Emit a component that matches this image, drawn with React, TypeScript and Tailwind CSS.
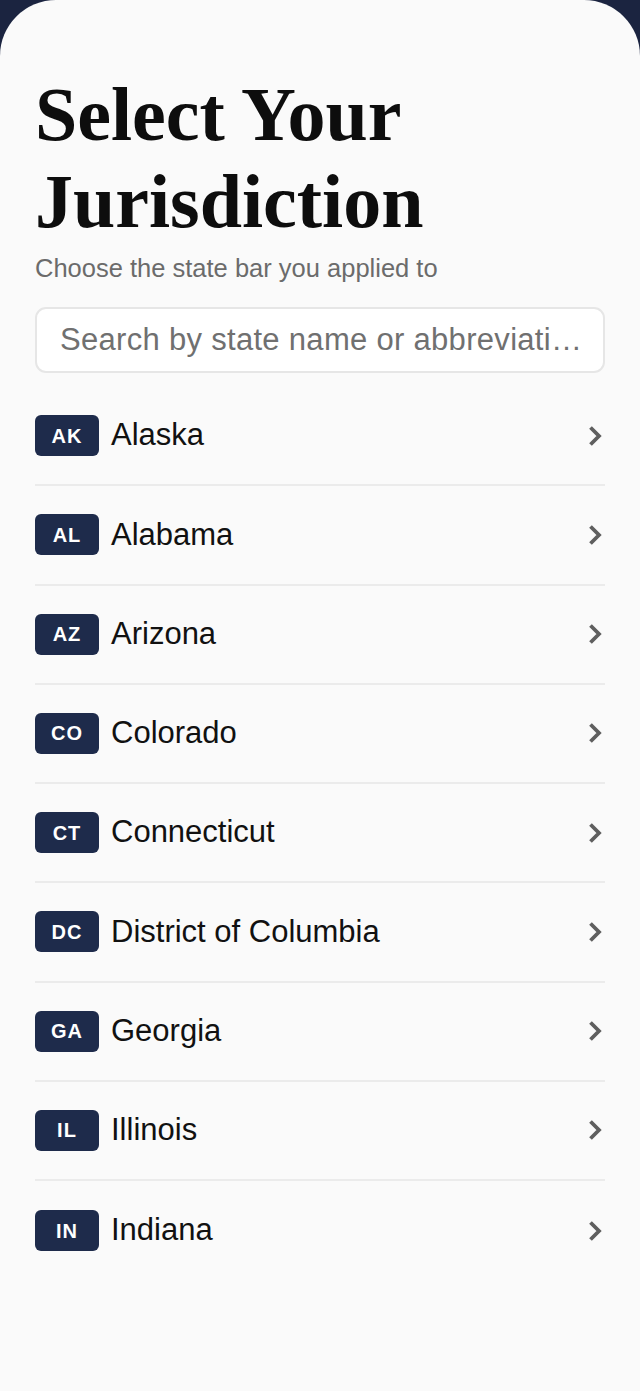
import React from 'react'

const states = [
  { code: 'AK', name: 'Alaska' },
  { code: 'AL', name: 'Alabama' },
  { code: 'AZ', name: 'Arizona' },
  { code: 'CO', name: 'Colorado' },
  { code: 'CT', name: 'Connecticut' },
  { code: 'DC', name: 'District of Columbia' },
  { code: 'GA', name: 'Georgia' },
  { code: 'IL', name: 'Illinois' },
  { code: 'IN', name: 'Indiana' },
]

function Chevron() {
  return (
    <svg width="16" height="22" viewBox="0 0 16 22" fill="none" className="mr-[2px]">
      <path d="M3.5 2.5 L12 11 L3.5 19.5" stroke="#5f5f5f" strokeWidth="3.8" strokeLinecap="butt" strokeLinejoin="miter" />
    </svg>
  )
}

export default function App() {
  return (
    <div className="min-h-screen bg-[#1b2440]">
      <div className="min-h-[1391px] rounded-t-[56px] bg-[#fafafa] px-[35px] pt-[71px] font-['Liberation_Sans',Arial,sans-serif]">
        <h1 className="font-['Liberation_Serif','Times_New_Roman',serif] text-[76px] font-bold leading-[87px] text-[#0d0d0d]">
          Select Your
          <br />
          Jurisdiction
        </h1>
        <p className="mt-[7px] text-[25.5px] leading-[32px] text-[#6b6b6b]">Choose the state bar you applied to</p>

        <input
          type="text"
          placeholder="Search by state name or abbreviation"
          className="mt-[23px] block h-[66px] w-full text-ellipsis rounded-[11px] border-2 border-[#e6e6e6] bg-white pl-[23px] pr-[20px] text-[31px] tracking-[0.3px] text-[#111] outline-none placeholder:text-[#707070]"
        />

        <ul className="mt-[14px]">
          {states.map((s, i) => (
            <li
              key={s.code}
              className={
                i === states.length - 1
                  ? 'flex h-[99.25px] items-center'
                  : 'flex h-[99.25px] items-center border-b-2 border-[#ebebeb]'
              }
            >
              <span className="flex h-[41px] w-[64px] items-center justify-center rounded-[6px] bg-[#1e2b4b] text-[20px] font-bold tracking-[1px] text-white">
                {s.code}
              </span>
              <span className="ml-[12px] flex-1 text-[31px] text-[#111]">{s.name}</span>
              <Chevron />
            </li>
          ))}
        </ul>
      </div>
    </div>
  )
}
